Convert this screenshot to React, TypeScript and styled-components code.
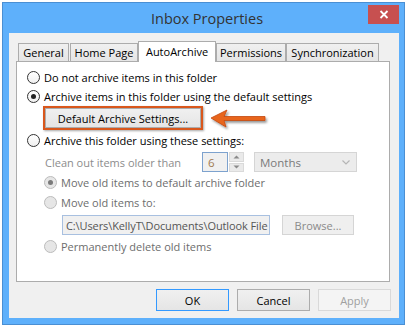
import React from "react";
import styled, { createGlobalStyle } from "styled-components";

const Global = createGlobalStyle`
  html, body { margin: 0; padding: 0; background: #ffffff; }
  body { font-family: "Open Sans", "Noto Sans", sans-serif; }
`;

const Window = styled.div`
  margin: 2px 0 0 2px;
  width: 403px;
  height: 323px;
  box-sizing: border-box;
  border: 1px solid #4a8fd3;
  background: #5eb0fb;
  padding: 0 5px 6px 6px;
  display: flex;
  flex-direction: column;
`;

const TitleBar = styled.div`
  height: 30px;
  display: grid;
  grid-template-columns: 1fr auto 1fr;
  align-items: center;
`;

const Title = styled.div`
  grid-column: 2;
  font-family: "Open Sans", sans-serif;
  font-size: 14.5px;
  color: #333333;
  padding-top: 1px;
  margin-left: 6px;
`;

const CloseButton = styled.div`
  grid-column: 3;
  justify-self: end;
  align-self: start;
  margin-top: 2px;
  width: 31px;
  height: 19px;
  background: #c75050;
  display: flex;
  align-items: center;
  justify-content: center;
`;

const Client = styled.div`
  flex: 1;
  background: #f0f0f0;
  padding: 8px 8px 0 7px;
  display: flex;
  flex-direction: column;
`;

const TabStrip = styled.div`
  display: flex;
  align-items: flex-end;
  height: 20px;
  margin-left: 2px;
`;

const Tab = styled.div<{ $active?: boolean; $w: number; $gap?: number }>`
  position: relative;
  z-index: ${(p) => (p.$active ? 2 : 1)};
  width: ${(p) => p.$w}px;
  box-sizing: border-box;
  height: ${(p) => (p.$active ? 21 : 18)}px;
  margin-bottom: ${(p) => (p.$active ? -1 : 0)}px;
  margin-right: ${(p) => p.$gap ?? 0}px;
  border: 1px solid #acacac;
  border-bottom: none;
  background: ${(p) =>
    p.$active ? "#ffffff" : "linear-gradient(#f0f0f0, #e5e5e5)"};
  font-size: 11px;
  color: #000;
  display: flex;
  justify-content: center;
  align-items: ${(p) => (p.$active ? "flex-start" : "center")};
  padding-top: ${(p) => (p.$active ? 2 : 0)}px;
  white-space: nowrap;
`;

const Panel = styled.div`
  width: 374px;
  height: 221px;
  box-sizing: border-box;
  border: 1px solid #acacac;
  background: #ffffff;
  padding: 6px 10px 0 10px;
  display: flex;
  flex-direction: column;
`;

const RadioRow = styled.div<{ $top?: number }>`
  display: flex;
  align-items: center;
  height: 19px;
  margin-top: ${(p) => p.$top ?? 0}px;
  gap: 4px;
  font-size: 11px;
  white-space: nowrap;
`;

const RadioLabel = styled.span<{ $disabled?: boolean }>`
  color: ${(p) => (p.$disabled ? "#6d6d6d" : "#000000")};
`;

const RadioCircle = styled.span<{ $checked?: boolean; $disabled?: boolean }>`
  width: 13px;
  height: 13px;
  box-sizing: border-box;
  border-radius: 50%;
  border: 1px solid ${(p) => (p.$disabled ? "#bcbcbc" : "#333333")};
  background: ${(p) =>
    p.$disabled ? "#e6e6e6" : "linear-gradient(#ffffff, #f0f0f0)"};
  display: flex;
  align-items: center;
  justify-content: center;
  flex: none;
  &::after {
    content: "";
    display: ${(p) => (p.$checked ? "block" : "none")};
    width: 5px;
    height: 5px;
    border-radius: 50%;
    background: ${(p) => (p.$disabled ? "#7a7a7a" : "#222222")};
  }
`;

const ActionRow = styled.div`
  display: flex;
  align-items: center;
  margin-left: 16px;
  height: 24px;
`;

const Highlight = styled.div`
  border: 2px solid #d9571c;
  box-shadow: 1px 1px 2px rgba(0, 0, 0, 0.35);
  display: flex;
`;

const PushButton = styled.div<{ $w: number; $h: number; $variant?: "default" | "normal" | "disabled" }>`
  width: ${(p) => p.$w}px;
  height: ${(p) => p.$h}px;
  box-sizing: border-box;
  border: 1px solid
    ${(p) =>
      p.$variant === "default"
        ? "#3399ff"
        : p.$variant === "disabled"
        ? "#d9d9d9"
        : "#acacac"};
  background: ${(p) =>
    p.$variant === "disabled" ? "#f4f4f4" : "linear-gradient(#f0f0f0, #e5e5e5)"};
  color: ${(p) => (p.$variant === "disabled" ? "#a0a0a0" : "#000000")};
  font-size: 11px;
  display: flex;
  align-items: center;
  justify-content: center;
  white-space: nowrap;
`;

const Arrow = styled.svg`
  margin-left: 6px;
  margin-top: 1px;
  flex: none;
`;

const Indented = styled.div`
  margin-left: 17px;
  display: flex;
  flex-direction: column;
`;

const CleanRow = styled.div`
  display: flex;
  align-items: center;
  height: 20px;
  margin-top: 2px;
  font-size: 11px;
`;

const MutedText = styled.span`
  color: #8c8c8c;
  margin-left: 1px;
  width: 157px;
  white-space: nowrap;
`;

const NumberBox = styled.div`
  width: 26px;
  height: 20px;
  box-sizing: border-box;
  border: 1px solid #7da2ce;
  background: #f0f0f0;
  color: #a07a50;
  font-size: 11.5px;
  padding-left: 5px;
  display: flex;
  align-items: center;
`;

const Spinner = styled.div`
  width: 15px;
  height: 20px;
  margin-left: 1px;
  display: flex;
  flex-direction: column;
  gap: 1px;
`;

const SpinHalf = styled.div`
  flex: 1;
  background: #eaeaea;
  border: 1px solid #dadada;
  display: flex;
  align-items: center;
  justify-content: center;
`;

const Select = styled.div`
  width: 103px;
  height: 20px;
  margin-left: 10px;
  box-sizing: border-box;
  border: 1px solid #d5d5d5;
  background: #ececec;
  color: #7a7a7a;
  font-size: 11.5px;
  padding: 0 6px 0 5px;
  display: flex;
  align-items: center;
  justify-content: space-between;
`;

const PathRow = styled.div`
  display: flex;
  align-items: center;
  margin: 3px 0 0 18px;
  height: 20px;
  gap: 12px;
`;

const PathBox = styled.div`
  width: 208px;
  height: 20px;
  box-sizing: border-box;
  border: 1px solid #a8c0e0;
  background: #f0f0f0;
  color: #555555;
  font-size: 11px;
  padding-left: 3px;
  display: flex;
  align-items: center;
  white-space: nowrap;
  letter-spacing: -0.1px;
`;

const GhostButton = styled.div`
  width: 72px;
  height: 20px;
  box-sizing: border-box;
  border: 1px solid #d5d5d5;
  background: #efefef;
  color: #8a8a8a;
  font-size: 11px;
  display: flex;
  align-items: center;
  justify-content: center;
`;

const Footer = styled.div`
  display: flex;
  justify-content: flex-end;
  gap: 8px;
  margin-top: 7px;
`;

export default function App() {
  return (
    <>
      <Global />
      <Window>
        <TitleBar>
          <Title>Inbox Properties</Title>
          <CloseButton>
            <svg width="10" height="9" viewBox="0 0 10 9">
              <path d="M1.5 1 L8.5 8 M8.5 1 L1.5 8" stroke="#ffffff" strokeWidth="1.8" />
            </svg>
          </CloseButton>
        </TitleBar>
        <Client>
          <TabStrip>
            <Tab $w={51} $gap={1}>General</Tab>
            <Tab $w={68}>Home Page</Tab>
            <Tab $w={78} $active>AutoArchive</Tab>
            <Tab $w={70}>Permissions</Tab>
            <Tab $w={93}>Synchronization</Tab>
          </TabStrip>
          <Panel>
            <RadioRow>
              <RadioCircle />
              <RadioLabel>Do not archive items in this folder</RadioLabel>
            </RadioRow>
            <RadioRow>
              <RadioCircle $checked />
              <RadioLabel>Archive items in this folder using the default settings</RadioLabel>
            </RadioRow>
            <ActionRow>
              <Highlight>
                <PushButton $w={156} $h={20}>Default Archive Settings...</PushButton>
              </Highlight>
              <Arrow width="62" height="24" viewBox="0 0 62 24">
                <defs>
                  <filter id="sh" x="-20%" y="-40%" width="150%" height="200%">
                    <feDropShadow dx="1.5" dy="2" stdDeviation="1.2" floodColor="#000" floodOpacity="0.4" />
                  </filter>
                </defs>
                <path
                  d="M2 11 L18 3 L15 9.5 L56 9.5 L56 13.5 L15 13.5 L17 20 Z"
                  fill="#e8651d"
                  stroke="#c4470f"
                  strokeWidth="0.8"
                  strokeLinejoin="round"
                  filter="url(#sh)"
                />
              </Arrow>
            </ActionRow>
            <RadioRow $top={1}>
              <RadioCircle />
              <RadioLabel>Archive this folder using these settings:</RadioLabel>
            </RadioRow>
            <Indented>
              <CleanRow>
                <MutedText>Clean out items older than</MutedText>
                <NumberBox>6</NumberBox>
                <Spinner>
                  <SpinHalf>
                    <svg width="7" height="4" viewBox="0 0 7 4">
                      <path d="M0.5 3.5 L3.5 0.5 L6.5 3.5 Z" fill="#8a8a8a" />
                    </svg>
                  </SpinHalf>
                  <SpinHalf>
                    <svg width="7" height="4" viewBox="0 0 7 4">
                      <path d="M0.5 0.5 L3.5 3.5 L6.5 0.5 Z" fill="#8a8a8a" />
                    </svg>
                  </SpinHalf>
                </Spinner>
                <Select>
                  <span>Months</span>
                  <svg width="8" height="5" viewBox="0 0 8 5">
                    <path d="M0.5 0.5 L4 4 L7.5 0.5" stroke="#b5b5b5" fill="none" strokeWidth="1.2" />
                  </svg>
                </Select>
              </CleanRow>
              <RadioRow $top={1}>
                <RadioCircle $checked $disabled />
                <RadioLabel $disabled>Move old items to default archive folder</RadioLabel>
              </RadioRow>
              <RadioRow $top={1}>
                <RadioCircle $disabled />
                <RadioLabel $disabled>Move old items to:</RadioLabel>
              </RadioRow>
              <PathRow>
                <PathBox>C:\Users\KellyT\Documents\Outlook File</PathBox>
                <GhostButton>Browse...</GhostButton>
              </PathRow>
              <RadioRow $top={2}>
                <RadioCircle $disabled />
                <RadioLabel $disabled>Permanently delete old items</RadioLabel>
              </RadioRow>
            </Indented>
          </Panel>
          <Footer>
            <PushButton $w={73} $h={22} $variant="default">OK</PushButton>
            <PushButton $w={73} $h={22}>Cancel</PushButton>
            <PushButton $w={73} $h={22} $variant="disabled">Apply</PushButton>
          </Footer>
        </Client>
      </Window>
    </>
  );
}
